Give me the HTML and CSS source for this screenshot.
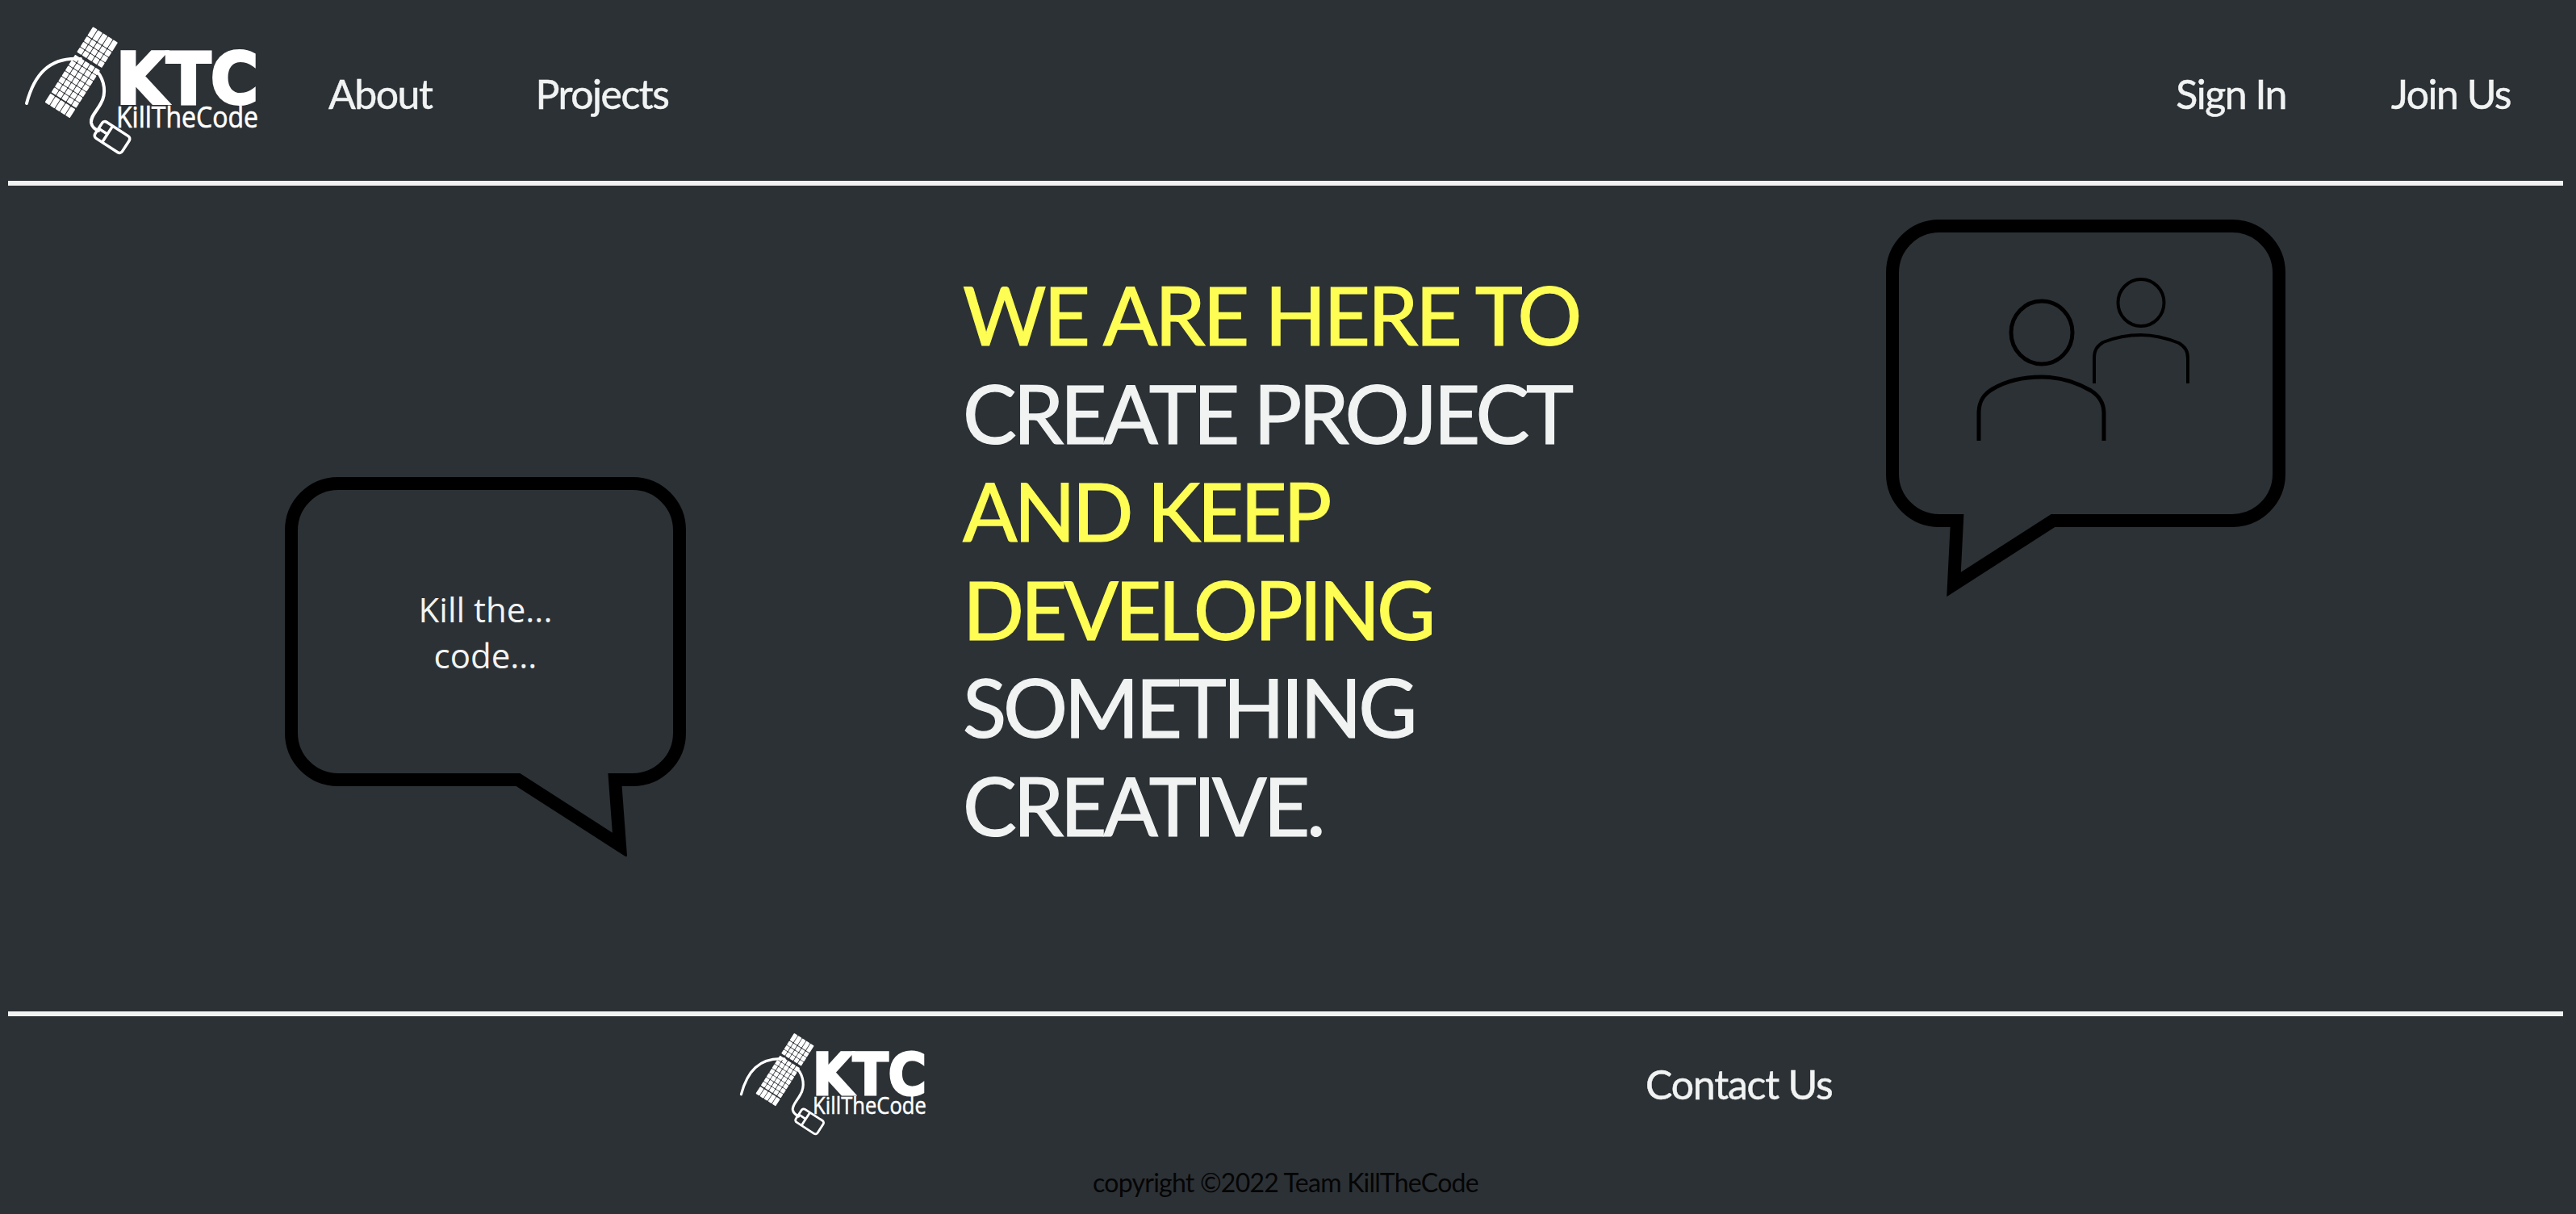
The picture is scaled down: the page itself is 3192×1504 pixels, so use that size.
FILE: index.html
```html
<!DOCTYPE html>
<html lang="en">
<head>
    <meta charset="UTF-8">
    <meta name="viewport" content="width=device-width, initial-scale=1.0">
    <title>KillTheCode</title>
    <link rel="stylesheet" href="styles.css">
</head>
<body>
    <!-- logo, used in header and footer -->
    <svg class="defs" width="0" height="0">
        <defs>
            <g id="key-row">
                <rect class="key" x="-18.3" width="6.6" height="7.2" rx="1"></rect>
                <rect class="key" x="-10.8" width="6.6" height="7.2" rx="1"></rect>
                <rect class="key" x="-3.3" width="6.6" height="7.2" rx="1"></rect>
                <rect class="key" x="4.2" width="6.6" height="7.2" rx="1"></rect>
                <rect class="key" x="11.7" width="6.6" height="7.2" rx="1"></rect>
            </g>
            <g id="long-row">
                <rect class="key" x="-18.3" width="6.6" height="13" rx="1"></rect>
                <rect class="key" x="-10.8" width="6.6" height="13" rx="1"></rect>
                <rect class="key" x="-3.3" width="6.6" height="13" rx="1"></rect>
                <rect class="key" x="4.2" width="6.6" height="13" rx="1"></rect>
                <rect class="key" x="11.7" width="6.6" height="13" rx="1"></rect>
            </g>
            <symbol id="logo" viewBox="30 34 294 160">
                <path class="cord" d="M33 130 C42 96 60 72 100 75"></path>
                <path class="cord" d="M120 90 C130 102 132 118 125 130 C120 140 112 146 113 154 C114 160 118 162 122 164"></path>
                <g transform="translate(100 93) rotate(32.5)">
                    <use href="#long-row" y="-57"></use>
                    <use href="#key-row" y="-43"></use>
                    <use href="#key-row" y="-35"></use>
                    <use href="#key-row" y="-27"></use>
                    <use href="#key-row" y="-16"></use>
                    <use href="#key-row" y="-8"></use>
                    <use href="#key-row" y="0"></use>
                    <use href="#key-row" y="8"></use>
                    <use href="#key-row" y="16"></use>
                    <use href="#key-row" y="24"></use>
                    <use href="#key-row" y="32"></use>
                    <use href="#long-row" y="41"></use>
                </g>
                <g class="mouse" transform="translate(139 172) rotate(33)">
                    <rect x="-20" y="-12" width="40" height="24" rx="4"></rect>
                    <path d="M-7 -12 V12 M-20 0 H-7"></path>
                </g>
                <text class="logo-big" x="144" y="130" textLength="176" lengthAdjust="spacingAndGlyphs">KTC</text>
                <text class="logo-small" x="144" y="160" textLength="176" lengthAdjust="spacingAndGlyphs">KillTheCode</text>
            </symbol>
        </defs>
    </svg>

    <header class="topbar">
        <svg class="logo"><use href="#logo"></use></svg>
        <nav class="nav-left">
            <a href="#">About</a>
            <a href="#">Projects</a>
        </nav>
        <nav class="nav-right">
            <a href="#">Sign In</a>
            <a href="#">Join Us</a>
        </nav>
    </header>

    <main class="hero">
        <!-- balao da esquerda -->
        <div class="bubble bubble-left">
            <svg class="bubble-shape" viewBox="0 0 497 470">
                <path d="M66 8 H431 A58 58 0 0 1 489 66 V317 A58 58 0 0 1 431 375 H409 L415 456 L289 375 H66 A58 58 0 0 1 8 317 V66 A58 58 0 0 1 66 8 Z"></path>
            </svg>
            <p class="bubble-text">Kill the...<br>code...</p>
        </div>

        <h1 class="headline">
            <span class="hl hl-first">WE ARE HERE TO</span><br>
            CREATE PROJECT<br>
            <span class="hl">AND KEEP</span><br>
            <span class="hl">DEVELOPING</span><br>
            SOMETHING<br>
            CREATIVE.
        </h1>

        <!-- balao da direita -->
        <div class="bubble bubble-right">
            <svg class="bubble-shape" viewBox="0 0 495 470">
                <path d="M66 8 H429 A58 58 0 0 1 487 66 V315 A58 58 0 0 1 429 373 H207 L84 452 L88 373 H66 A58 58 0 0 1 8 315 V66 A58 58 0 0 1 66 8 Z"></path>
                <g class="people">
                    <ellipse class="thick" cx="193" cy="140" rx="38" ry="39"></ellipse>
                    <path class="thick" d="M115 274 V240 C115 226 120 217 132 210 C152 198 172 195 193 195 C214 195 234 200 254 212 C265 219 270 228 270 240 V274"></path>
                    <ellipse cx="316" cy="103" rx="28.5" ry="29"></ellipse>
                    <path d="M258 203 V172 C258 162 261 157 269 152 C284 146 300 143 316 143 C332 143 348 147 363 153 C371 158 374 163 374 172 V203"></path>
                </g>
            </svg>
        </div>
    </main>

    <footer class="bottombar">
        <div class="bottom-row">
            <svg class="logo logo-small-size"><use href="#logo"></use></svg>
            <a class="contact" href="#">Contact Us</a>
        </div>
        <p class="copyright">copyright ©2022 Team KillTheCode</p>
    </footer>
</body>
</html>
```

FILE: styles.css
```css
html, body {
    margin: 0;
    height: 1504px;
    overflow: hidden;
}

body {
    background-color: #2c3135;
    color: #f1f3f3;
    font-family: Lato, "Open Sans", sans-serif;
    padding: 0 16px 0 10px;
    box-sizing: border-box;
}

a {
    color: #f1f3f3;
    text-decoration: none;
    font-size: 50px;
    letter-spacing: -1.5px;
    -webkit-text-stroke: 0.5px #f1f3f3;
}

.defs {
    position: absolute;
}

/* logo */
.logo {
    width: 294px;
    height: 160px;
    display: block;
    flex: none;
}

.logo-small-size {
    width: 235px;
    height: 128px;
}

.cord {
    fill: none;
    stroke: #fff;
    stroke-width: 4;
    stroke-linecap: round;
}

.key {
    fill: #fff;
}

.mouse rect, .mouse path {
    fill: none;
    stroke: #fff;
    stroke-width: 3.5;
}

.logo-big {
    fill: #fff;
    stroke: #fff;
    stroke-width: 4;
    stroke-linejoin: miter;
    font-family: "DejaVu Sans", sans-serif;
    font-weight: 700;
    font-size: 88px;
}

.logo-small {
    fill: #fff;
    stroke: #fff;
    stroke-width: 0.6;
    font-family: "Open Sans", sans-serif;
    font-size: 36px;
}

/* header */
.topbar {
    height: 224px;
    border-bottom: 6px solid #f1f3f3;
    display: flex;
    align-items: center;
    padding-left: 20px;
    padding-right: 65px;
}

.topbar .logo {
    margin-top: 0;
}

.nav-left {
    display: flex;
    gap: 128px;
    margin-left: 83px;
    margin-top: 8px;
}

.nav-right {
    display: flex;
    gap: 130px;
    margin-left: auto;
    margin-top: 8px;
}

/* meio */
.hero {
    height: 1023px;
    display: grid;
    grid-template-columns: 1183px 1144px 1fr;
    align-items: start;
}

.bubble {
    display: grid;
}

.bubble-left {
    width: 497px;
    height: 470px;
    margin-left: 343px;
    margin-top: 361px;
}

.bubble-right {
    width: 495px;
    height: 470px;
    margin-top: 42px;
}

.bubble-shape {
    grid-area: 1 / 1;
    display: block;
}

.bubble-shape > path {
    fill: none;
    stroke: #000;
    stroke-width: 16;
    stroke-miterlimit: 10;
}

.people ellipse, .people path {
    fill: none;
    stroke: #000;
    stroke-width: 4;
}

.people .thick {
    stroke-width: 5;
}

.bubble-text {
    grid-area: 1 / 1;
    margin: 0;
    height: 383px;
    display: flex;
    align-items: center;
    justify-content: center;
    text-align: center;
    font-family: "Open Sans", sans-serif;
    font-size: 42px;
    line-height: 57px;
}

.headline {
    margin: 0;
    margin-top: 99px;
    font-size: 100px;
    font-weight: 400;
    line-height: 121.6px;
    letter-spacing: -4.3px;
    -webkit-text-stroke: 1.2px;
    white-space: nowrap;
}

.hl {
    color: #fdfd54;
}

.hl-first {
    letter-spacing: -3.3px;
}

/* footer */
.bottombar {
    border-top: 6px solid #f1f3f3;
}

.bottom-row {
    display: flex;
    align-items: center;
    padding-left: 906px;
    padding-top: 20px;
}

.contact {
    margin-left: 888px;
    letter-spacing: -1.2px;
}

.copyright {
    margin: 0;
    margin-top: 38px;
    text-align: center;
    color: #050505;
    font-size: 32px;
    letter-spacing: -0.75px;
}
```
